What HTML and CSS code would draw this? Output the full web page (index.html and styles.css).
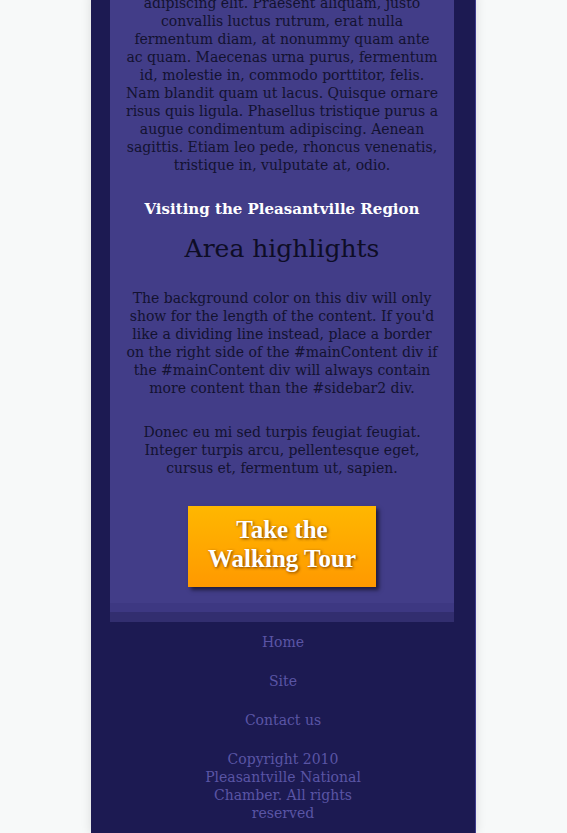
FILE: index.html
```
<!DOCTYPE html>
<html lang="en">
<head>
    <meta charset="UTF-8">
    <meta name="viewport" content="width=device-width, initial-scale=1.0">
    <title>Pleasantville Region</title>
    <link rel="stylesheet" href="styles.css">
</head>
<body>
    <div class="container">
        <div class="sidebar">
            <div class="sidebar-content">
                <p class="intro">adipiscing elit. Praesent aliquam, justo convallis luctus rutrum, erat nulla fermentum diam, at nonummy quam ante ac quam. Maecenas urna purus, fermentum id, molestie in, commodo porttitor, felis. Nam blandit quam ut lacus. Quisque ornare risus quis ligula. Phasellus tristique purus a augue condimentum adipiscing. Aenean sagittis. Etiam leo pede, rhoncus venenatis, tristique in, vulputate at, odio.</p>

                <h3>Visiting the Pleasantville Region</h3>
                <h2>Area highlights</h2>

                <p>The background color on this div will only show for the length of the content. If you'd like a dividing line instead, place a border on the right side of the #mainContent div if the #mainContent div will always contain more content than the #sidebar2 div.</p>
                <p>Donec eu mi sed turpis feugiat feugiat. Integer turpis arcu, pellentesque eget, cursus et, fermentum ut, sapien.</p>

                <a class="tour-button" href="#">Take the<br>Walking Tour</a>
            </div>
            <div class="sidebar-base"></div>
        </div>

        <div class="footer">
            <a href="#">Home</a>
            <a href="#">Site</a>
            <a href="#">Contact us</a>
            <p class="copyright">Copyright 2010 Pleasantville National Chamber. All rights reserved</p>
        </div>
    </div>
</body>
</html>
```

FILE: styles.css
```
body {
    font-family: "DejaVu Serif", Georgia, serif;
    font-size: 14px;
    line-height: 18px;
    margin: 0;
    padding: 0;
    background-color: #f7f9f9;
    color: #131230;
}
.container {
    width: 384px;
    margin: 0 auto;
    background-color: #1c1a52;
    border-right: 1px solid #3f3c8e;
    border-bottom: 1px solid #3f3c8e;
    box-shadow: 0 0 10px rgba(0, 0, 0, 0.12);
}
.sidebar {
    margin: 0 21px 0 19px;
    background-color: #423d88;
}
.sidebar-content {
    padding: 0 15px 16px;
    text-align: center;
}
.sidebar-content p {
    margin: 0 0 26px;
}
.intro {
    margin-top: -6px !important;
}
.sidebar-content h3 {
    color: #fff;
    font-size: 15px;
    margin: 26px 0 0;
    line-height: 18px;
}
.sidebar-content h2 {
    font-weight: normal;
    font-size: 25px;
    line-height: 34px;
    margin: 14px 0 23px;
    color: #0e0d26;
}
.tour-button {
    display: inline-block;
    width: 188px;
    height: 81px;
    box-sizing: border-box;
    padding-top: 9px;
    margin-top: 3px;
    background: linear-gradient(#ffb700, #ff9900);
    box-shadow: 3px 3px 4px rgba(0, 0, 0, 0.55);
    color: #fff;
    font-family: "Liberation Serif", serif;
    font-size: 25px;
    line-height: 29px;
    font-weight: bold;
    text-decoration: none;
    text-shadow: 1px 1px 3px rgba(90, 40, 0, 0.8);
}
.sidebar-base {
    height: 9px;
    background-color: #3d3882;
    border-bottom: 10px solid #322e6f;
}
.footer {
    padding: 11px 0 11px;
    text-align: center;
}
.footer a {
    display: block;
    color: #5a55a5;
    text-decoration: none;
    margin-bottom: 21px;
}
.copyright {
    width: 170px;
    margin: 0 auto;
    color: #5a55a5;
}
```
